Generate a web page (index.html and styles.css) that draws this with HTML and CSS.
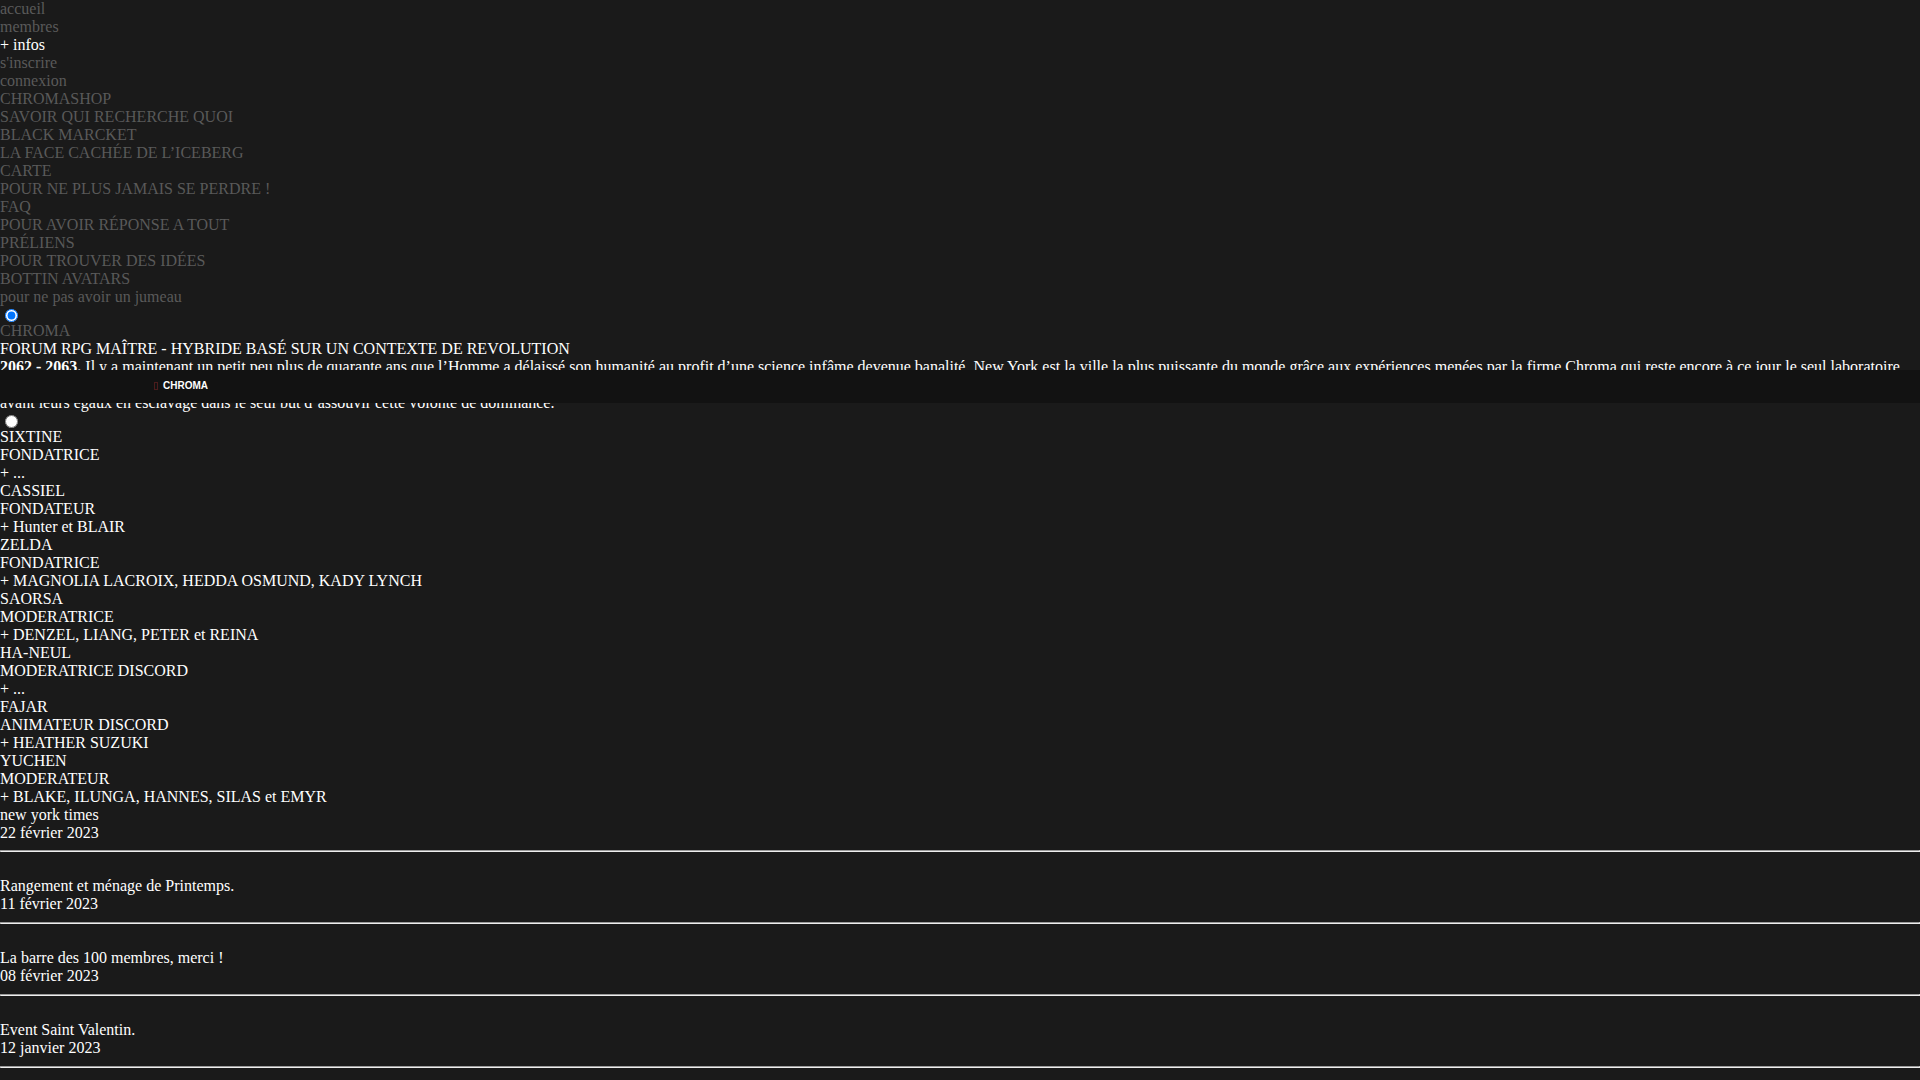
FILE: index.html
```html
<!DOCTYPE html>
<html lang="fr">
<head>
<meta charset="utf-8">
<title>Chroma</title>
<link rel="stylesheet" href="styles.css">
</head>
<body>
<nav class="menu">
  <a class="menu-link" href="#">accueil</a>
  <a class="menu-link" href="#">membres</a>
  <a class="menu-link is-open" href="#">+ infos</a>
  <a class="menu-link" href="#">s'inscrire</a>
  <a class="menu-link" href="#">connexion</a>
  <a class="menu-item" href="#"><span class="menu-title">CHROMASHOP</span><span class="menu-sub">SAVOIR QUI RECHERCHE QUOI</span></a>
  <a class="menu-item" href="#"><span class="menu-title">BLACK MARCKET</span><span class="menu-sub">LA FACE CACHÉE DE L’ICEBERG</span></a>
  <a class="menu-item" href="#"><span class="menu-title">CARTE</span><span class="menu-sub">POUR NE PLUS JAMAIS SE PERDRE !</span></a>
  <a class="menu-item" href="#"><span class="menu-title">FAQ</span><span class="menu-sub">POUR AVOIR RÉPONSE A TOUT</span></a>
  <a class="menu-item" href="#"><span class="menu-title">PRÉLIENS</span><span class="menu-sub">POUR TROUVER DES IDÉES</span></a>
  <a class="menu-item" href="#"><span class="menu-title">BOTTIN AVATARS</span><span class="menu-sub">pour ne pas avoir un jumeau</span></a>
</nav>

<input class="slide-dot" type="radio" name="slide" checked>
<section class="intro">
  <div class="intro-kicker">CHROMA</div>
  <div class="intro-title">FORUM RPG MAÎTRE - HYBRIDE BASÉ SUR UN CONTEXTE DE REVOLUTION</div>
  <p class="intro-text"><b>2062 - 2063.</b> Il y a maintenant un petit peu plus de quarante ans que l’Homme a délaissé son humanité au profit d’une science infâme devenue banalité. New York est la ville la plus puissante du monde grâce aux expériences menées par la firme Chroma qui reste encore à ce jour le seul laboratoire capable de rendre les hommes plus forts, plus rapides et plus intelligents, quitte à passer<br>avant leurs égaux en esclavage dans le seul but d’assouvir cette volonté de dominance.</p>
</section>

<input class="slide-dot" type="radio" name="slide">
<section class="staff">
  <div class="staff-card"><div>SIXTINE</div><div>FONDATRICE</div><div>+ ...</div></div>
  <div class="staff-card"><div>CASSIEL</div><div>FONDATEUR</div><div>+ Hunter et BLAIR</div></div>
  <div class="staff-card"><div>ZELDA</div><div>FONDATRICE</div><div>+ MAGNOLIA LACROIX, HEDDA OSMUND, KADY LYNCH</div></div>
  <div class="staff-card"><div>SAORSA</div><div>MODERATRICE</div><div>+ DENZEL, LIANG, PETER et REINA</div></div>
  <div class="staff-card"><div>HA-NEUL</div><div>MODERATRICE DISCORD</div><div>+ ...</div></div>
  <div class="staff-card"><div>FAJAR</div><div>ANIMATEUR DISCORD</div><div>+ HEATHER SUZUKI</div></div>
  <div class="staff-card"><div>YUCHEN</div><div>MODERATEUR</div><div>+ BLAKE, ILUNGA, HANNES, SILAS et EMYR</div></div>
</section>

<section class="news">
  <div class="news-head">new york times</div>
  <article class="news-first"><div class="news-date">22 février 2023</div></article>
  <hr class="news-sep">
  <article class="news-item"><div class="news-title">Rangement et ménage de Printemps.</div><div class="news-date">11 février 2023</div></article>
  <hr class="news-sep">
  <article class="news-item"><div class="news-title">La barre des 100 membres, merci !</div><div class="news-date">08 février 2023</div></article>
  <hr class="news-sep">
  <article class="news-item"><div class="news-title">Event Saint Valentin.</div><div class="news-date">12 janvier 2023</div></article>
  <hr class="news-sep">
</section>

<div class="topbar">
  <span class="topbar-icon"></span>
  <span class="topbar-name">CHROMA</span>
</div>
</body>
</html>
```

FILE: styles.css
```css
html, body {
  margin: 0;
  padding: 0;
}

body {
  background: #1a1a1a;
  color: #fff;
  font-family: "Liberation Serif", "Times New Roman", serif;
  font-size: 16px;
  line-height: 18px;
}

.menu {
  display: flex;
  flex-direction: column;
  align-items: flex-start;
}

.menu-link,
.menu-item {
  color: #595959;
  text-decoration: none;
}

.menu-link.is-open {
  color: #fff;
}

.menu-item {
  display: flex;
  flex-direction: column;
}

.slide-dot {
  display: block;
  width: 13px;
  height: 13px;
  margin: 3px 3px 0 5px;
}

.intro-kicker {
  color: #595959;
}

.intro-text {
  margin: 0;
}

.staff-card {
  display: flex;
  flex-direction: column;
}

.news-sep {
  color: #fff;
  border-style: inset;
  border-width: 1px;
  margin: 8px 0;
}

.news-item {
  padding: 17px 0 1px;
}

.topbar {
  position: fixed;
  top: 370px;
  left: 0;
  right: 0;
  height: 33px;
  background: #121212;
  display: flex;
  align-items: center;
  padding-left: 154px;
  padding-bottom: 1px;
  box-sizing: border-box;
  gap: 5px;
}

.topbar-icon {
  display: inline-block;
  width: 2px;
  height: 6px;
  border: 1px solid #4a1c1c;
}

.topbar-name {
  font-family: "Liberation Sans", Arial, sans-serif;
  font-weight: bold;
  font-size: 10px;
  line-height: 12px;
  color: #fff;
}
```
